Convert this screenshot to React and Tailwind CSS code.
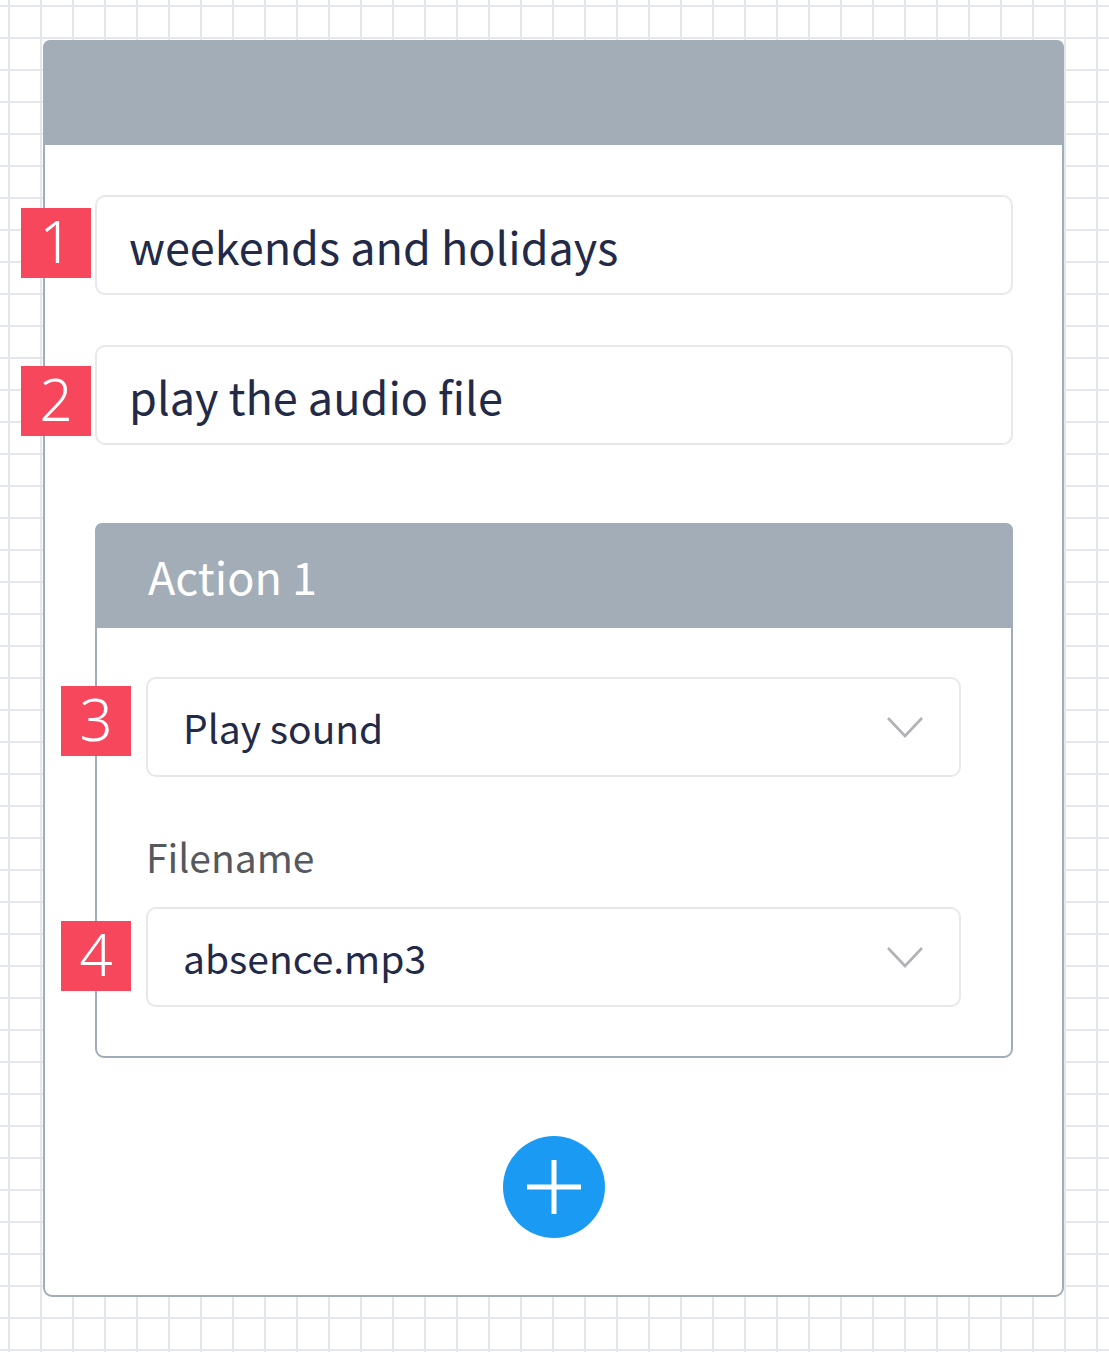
const font = { fontFamily: '"Noto Sans CJK JP", Lato, sans-serif' };

function Badge({ n, className }) {
  return (
    <div
      style={{ fontFamily: '"Noto Sans", sans-serif' }}
      className={`absolute w-[70px] h-[70px] bg-[#f6475d] text-white flex items-center justify-center text-[58px] font-light leading-none ${className}`}
    >
      <span className="pb-[4px]">{n}</span>
    </div>
  );
}

function Chevron() {
  return (
    <svg width="38" height="24" viewBox="0 0 38 24" fill="none">
      <path d="M2 3l17 18L36 3" stroke="#b0b2b6" strokeWidth="2.6" />
    </svg>
  );
}

function Field({ text, select }) {
  return (
    <div
      className={`h-[100px] rounded-[10px] border-2 border-[#e6e8ec] bg-white flex items-center justify-between ${
        select ? "pl-[35px] pr-[35px]" : "pl-[32px] pr-[38px]"
      }`}
    >
      <span className={`${select ? "text-[39px]" : "text-[45px]"} text-[#232a47] leading-none`}>{text}</span>
      {select && <Chevron />}
    </div>
  );
}

export default function App() {
  return (
    <div
      style={font}
      className="min-h-[1352px] w-[1109px] bg-white bg-[linear-gradient(to_right,#e3e6eb_2px,transparent_2px),linear-gradient(to_bottom,#e3e6eb_2px,transparent_2px)] bg-[size:32px_32px] bg-[position:8px_5px] pt-[40px] pl-[43px]"
    >
      <div className="relative w-[1021px] h-[1257px] rounded-[9px] border-2 border-[#a0acb8] bg-white">
        {/* Header */}
        <div className="h-[105px] bg-[#a2adb8] rounded-t-[7px] -mx-[2px] -mt-[2px]" />

        <div className="pl-[50px] pr-[49px] pt-[50px]">
          {/* Rule fields */}
          <div className="relative">
            <Badge n="1" className="-left-[74px] top-[13px]" />
            <Field text="weekends and holidays" />
          </div>
          <div className="relative mt-[50px]">
            <Badge n="2" className="-left-[74px] top-[21px]" />
            <Field text="play the audio file" />
          </div>

          {/* Action box */}
          <div className="mt-[78px] h-[535px] rounded-[9px] border-2 border-[#a0acb8]">
            <div className="h-[105px] bg-[#a2adb8] rounded-t-[7px] -mx-[2px] -mt-[2px] flex items-center pl-[53px]">
              <span className="text-[45px] text-white leading-none">Action 1</span>
            </div>
            <div className="pl-[49px] pr-[50px] pt-[49px]">
              <div className="relative">
                <Badge n="3" className="-left-[85px] top-[9px]" />
                <Field text="Play sound" select />
              </div>
              <div className="mt-[53px] mb-[25px] text-[39px] text-[#55595e] leading-[52px]">Filename</div>
              <div className="relative">
                <Badge n="4" className="-left-[85px] top-[14px]" />
                <Field text="absence.mp3" select />
              </div>
            </div>
          </div>

          {/* Add button */}
          <div className="flex justify-center mt-[78px]">
            <button className="w-[102px] h-[102px] rounded-full bg-[#1a9af2] flex items-center justify-center">
              <svg width="58" height="58" viewBox="0 0 58 58">
                <path d="M29 2v54M2 29h54" stroke="white" strokeWidth="5" />
              </svg>
            </button>
          </div>
        </div>
      </div>
    </div>
  );
}
